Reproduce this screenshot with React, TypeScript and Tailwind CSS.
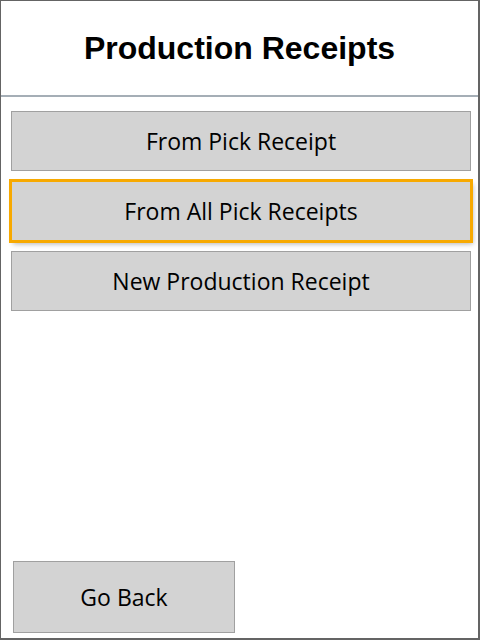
import React from "react";

const options = [
  { label: "From Pick Receipt", focused: false },
  { label: "From All Pick Receipts", focused: true },
  { label: "New Production Receipt", focused: false },
];

const App: React.FC = () => {
  return (
    <div className="w-[480px] h-[640px] bg-white border-l border-t border-r-2 border-b-2 border-[#646464] flex flex-col">
      {/* Header */}
      <div className="h-[96px] border-b-2 border-[#a5aeb6] flex items-center justify-center">
        <h1 className="text-[32px] font-bold text-black font-['Liberation_Sans',Arial,sans-serif]">
          Production Receipts
        </h1>
      </div>

      {/* Menu options */}
      <div className="flex flex-col gap-[10px] pl-[10px] pr-[7px] pt-[14px]">
        {options.map((opt) => (
          <button
            key={opt.label}
            className={
              opt.focused
                ? "h-[60px] w-full bg-[#d3d3d3] border border-[#a0a0a0] text-[23px] text-black font-['Open_Sans',sans-serif] outline-[3px] -outline-offset-1 outline-[#f7a900] shadow-[2px_3px_5px_rgba(0,0,0,0.3)]"
                : "h-[60px] w-full bg-[#d3d3d3] border border-[#a0a0a0] text-[23px] text-black font-['Open_Sans',sans-serif]"
            }
          >
            {opt.label}
          </button>
        ))}
      </div>

      <div className="flex-1" />

      {/* Footer */}
      <div className="px-[12px] pb-[5px]">
        <button className="h-[72px] w-[222px] bg-[#d3d3d3] border border-[#a0a0a0] text-[23px] text-black font-['Open_Sans',sans-serif]">
          Go Back
        </button>
      </div>
    </div>
  );
};

export default App;
